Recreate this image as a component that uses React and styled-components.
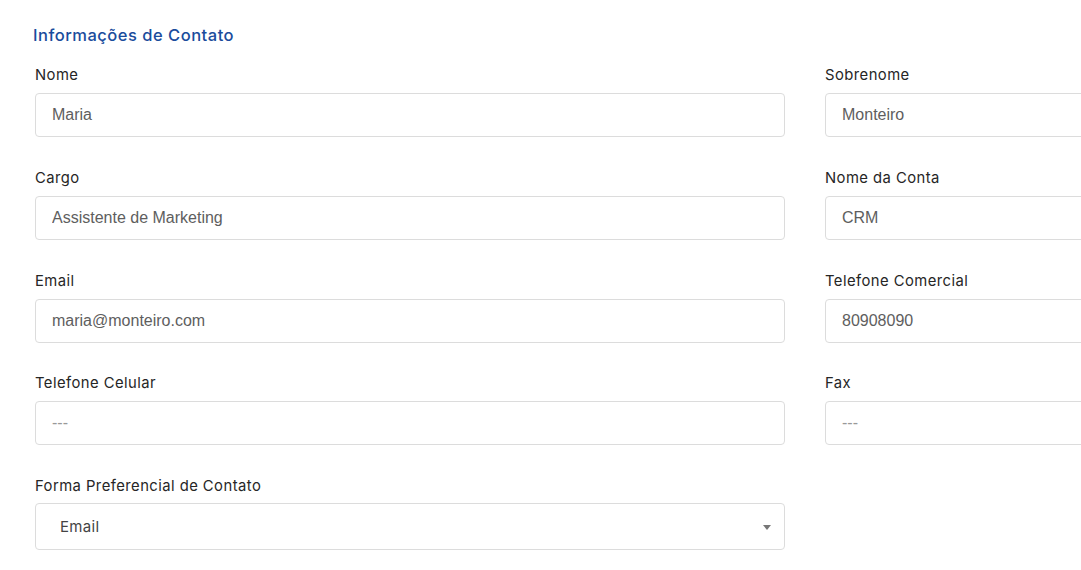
import React from 'react';
import styled, { createGlobalStyle } from 'styled-components';

const GlobalStyle = createGlobalStyle`
  html, body {
    margin: 0;
    padding: 0;
    background: #fff;
    overflow: hidden;
  }
  * {
    box-sizing: border-box;
  }
`;

const Section = styled.section`
  padding: 24px 0 0 35px;
  width: 1600px;
  font-family: Inter, "Noto Sans", sans-serif;
`;

const SectionTitle = styled.h3`
  margin: 0 0 19px -2px;
  font-size: 16.5px;
  line-height: 22px;
  font-weight: 500;
  letter-spacing: 0.5px;
  color: #1a4c9c;
`;

const FieldGrid = styled.div`
  display: grid;
  grid-template-columns: 750px 750px;
  column-gap: 40px;
  row-gap: 31px;
`;

const Field = styled.div`
  display: flex;
  flex-direction: column;
  margin-top: ${props => props.$shift || 0}px;
`;

const Label = styled.label`
  font-size: 14.8px;
  line-height: 20px;
  letter-spacing: 0.45px;
  color: #262626;
  margin-bottom: ${props => props.$tight ? '7px' : '8px'};
`;

const Input = styled.input`
  height: 44px;
  padding: 0 16px;
  border: 1px solid #dcdcdc;
  border-radius: 4px;
  background: #fff;
  font-family: "Liberation Sans", Arial, sans-serif;
  font-size: 16px;
  color: #5e5e5e;
  outline: none;

  &::placeholder {
    color: #999;
  }
`;

const SelectBox = styled.div`
  position: relative;
  display: flex;
  align-items: center;
  height: 47px;
  padding: 0 24px;
  border: 1px solid #dcdcdc;
  border-radius: 4px;
  font-family: Inter, "Noto Sans", sans-serif;
  font-size: 15px;
  letter-spacing: 0.3px;
  color: #444;
`;

const Caret = styled.span`
  position: absolute;
  right: 13px;
  top: 50%;
  margin-top: -2px;
  width: 0;
  height: 0;
  border-left: 4px solid transparent;
  border-right: 4px solid transparent;
  border-top: 5px solid #777;
`;

const fields = [
  ['Nome', 'Maria'],
  ['Sobrenome', 'Monteiro'],
  ['Cargo', 'Assistente de Marketing'],
  ['Nome da Conta', 'CRM'],
  ['Email', 'maria@monteiro.com'],
  ['Telefone Comercial', '80908090'],
  ['Telefone Celular', '', '---'],
  ['Fax', '', '---'],
];

export default function App() {
  return (
    <>
      <GlobalStyle />
      <Section>
        <SectionTitle>Informações de Contato</SectionTitle>
        <FieldGrid>
          {fields.map(([label, value, placeholder], i) => (
            <Field key={label} $shift={i >= 6 ? -1 : 0}>
              <Label>{label}</Label>
              <Input defaultValue={value} placeholder={placeholder} readOnly />
            </Field>
          ))}
          <Field>
            <Label $tight>Forma Preferencial de Contato</Label>
            <SelectBox>
              Email
              <Caret />
            </SelectBox>
          </Field>
        </FieldGrid>
      </Section>
    </>
  );
}
